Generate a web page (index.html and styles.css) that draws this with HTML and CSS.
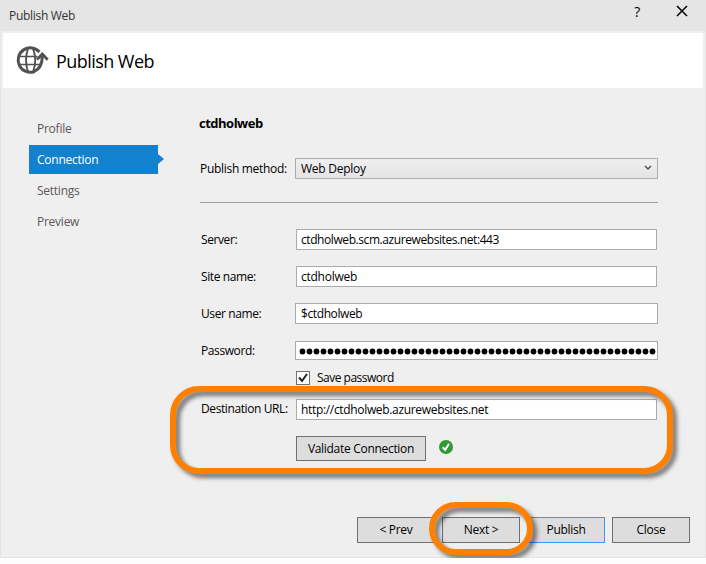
FILE: index.html
```html
<!DOCTYPE html>
<html lang="en">
<head>
<meta charset="utf-8">
<title>Publish Web</title>
<link rel="stylesheet" href="styles.css">
</head>
<body>
<div class="window">
  <div class="titlebar">
    <span class="caption">Publish Web</span>
    <span class="help">?</span>
    <svg class="close-icon" width="12" height="12" viewBox="0 0 12 12"><path d="M1 1 11 11M11 1 1 11" fill="none" stroke="#000" stroke-width="1.5"/></svg>
  </div>
  <header class="banner">
    <svg class="globe" width="34" height="30" viewBox="0 0 34 30" fill="none" stroke="#505153">
      <path d="M24.500 7A12.200 12.200 0 1 0 19 26.700Q27.500 23 27.300 10.500" stroke-width="3"/>
      <path d="M22 14.500 27.300 9 32.700 14.800" stroke-width="2.800"/>
      <path d="M4 11.500H22.500M4 19.500H25" stroke-width="1.600"/>
      <path d="M13 3.500Q9 15 13 27M18 3.500Q22.500 15 18 27" stroke-width="1.900"/>
    </svg>
    <h1>Publish Web</h1>
  </header>
  <div class="content">
    <nav class="steps">
      <a>Profile</a>
      <a class="active">Connection</a>
      <a>Settings</a>
      <a>Preview</a>
    </nav>
    <main class="form">
      <h2>ctdholweb</h2>
      <div class="row method">
        <label>Publish method:</label>
        <div class="select"><span>Web Deploy</span><svg width="8" height="6" viewBox="0 0 8 6"><path d="M1 1 4 4 7 1" fill="none" stroke="#555" stroke-width="1.500"/></svg></div>
      </div>
      <hr>
      <div class="row server"><label>Server:</label><div class="field"><span class="host">ctdholweb.scm.azurewebsites.net:443</span></div></div>
      <div class="row"><label>Site name:</label><div class="field"><span>ctdholweb</span></div></div>
      <div class="row"><label>User name:</label><div class="field wide"><span>$ctdholweb</span></div></div>
      <div class="row password"><label>Password:</label><div class="field wide"><svg width="361" height="17"><path class="dots" d="M6.500 9.500H356.600"/></svg></div></div>
      <div class="save"><span class="checkbox"><svg width="12" height="12" viewBox="0 0 12 12"><path d="M2 5.500 5 9 10 2" fill="none" stroke="#222" stroke-width="2"/></svg></span><span>Save password</span></div>
      <div class="row destination"><label>Destination URL:</label><div class="field"><span class="url">http://ctdholweb.azurewebsites.net</span></div></div>
      <div class="validate">
        <button class="btn validate-btn">Validate Connection</button>
        <svg width="14" height="14" viewBox="0 0 14 14"><circle cx="7" cy="7" r="7" fill="#339933"/><path d="M3.700 7.200 6.200 9.800 10 3.700" fill="none" stroke="#fff" stroke-width="2"/></svg>
      </div>
    </main>
  </div>
  <footer class="actions">
    <button class="btn">&lt; Prev</button>
    <button class="btn">Next &gt;</button>
    <button class="btn default">Publish</button>
    <button class="btn">Close</button>
  </footer>
  <div class="highlight highlight-url"></div>
  <div class="highlight highlight-next"></div>
</div>
</body>
</html>
```

FILE: styles.css
```css
* { box-sizing: border-box; }
body { margin: 0; background: #fdfdfd; font: 12px/16px "Open Sans", "Noto Sans", sans-serif; letter-spacing: -0.25px; color: #000; }
.window { position: relative; width: 706px; height: 558px; border: solid #e5e5e5; border-width: 0 1px 1px; background: #efefef; overflow: visible; }
.titlebar { height: 31px; background: #e5e5e5; display: flex; align-items: flex-start; padding: 8px 17px 0 8px; }
.caption { flex: 1; color: #333; letter-spacing: -0.3px; }
.help { margin: -5px 36px 0 0; font-size: 14px; line-height: 18px; font-weight: 500; }
.close-icon { margin-top: -3px; }
.banner { height: 55px; margin: 2px 2px 0; background: #fff; display: flex; align-items: center; padding-left: 12px; gap: 7px; }
.globe { margin-top: -1px; }
h1 { margin: 1px 0 0; font-size: 18px; line-height: 24px; font-weight: 400; letter-spacing: -0.55px; }
.content { display: flex; height: 429px; }
.steps { width: 129px; margin: 26px 0 0 28px; color: #5d5659; }
.steps a { display: flex; align-items: center; height: 29px; padding-left: 8px; margin-bottom: 2px; position: relative; }
.steps .active { background: #1382ce; color: #fff; }
.steps .active::after { content: ""; position: absolute; left: 129px; top: 9px; border: solid transparent; border-width: 5.500px 0 5.500px 6px; border-left-color: #1382ce; }
.form { width: 458px; margin-left: 42px; }
h2 { margin: 27px 0 27px -1px; font-size: 13px; line-height: 16px; font-weight: 700; letter-spacing: -0.5px; }
.row { display: flex; align-items: center; height: 21px; margin-bottom: 16px; padding-right: 1px; }
label { width: 96px; padding-left: 1px; white-space: nowrap; letter-spacing: -0.4px; }
.method { padding: 0; margin: 0; }
.method label { width: 95px; padding-left: 0; letter-spacing: -0.3px; }
.select { display: flex; align-items: center; justify-content: space-between; width: 363px; height: 21px; border: 1px solid #acacac; background: linear-gradient(#f0f0f0, #e4e4e4); padding: 0 5px; }
.select svg { margin-top: -1px; }
hr { height: 1px; border: 0; background: #a0a0a0; margin: 23px 0 26px; }
.field { width: 361px; height: 21px; border: 1px solid #ababab; background: #fff; padding: 2px 0 0 4px; white-space: nowrap; overflow: hidden; }
.field.wide { width: 363px; margin: 0 -1px; padding-left: 5px; letter-spacing: -0.4px; }
.host { letter-spacing: -0.42px; }
.url { letter-spacing: -0.33px; }
.password { margin-bottom: 0; height: 19px; margin-top: 17px; }
.password .field { height: 19px; padding: 0; }
.field svg { display: block; }
.dots { fill: none; stroke: #000; stroke-width: 5.8; stroke-linecap: round; stroke-dasharray: 0 7; }
.save { display: flex; align-items: center; margin: 10px 0 0 96px; height: 15px; gap: 7px; letter-spacing: -0.5px; }
.checkbox { width: 14px; height: 14px; border: 1px solid #707070; background: #fff; }
.checkbox svg { display: block; }
.destination { margin: 14px 0 16px; }
.destination label { margin-top: -1px; }
.validate { display: flex; margin-left: 96px; gap: 13px; }
.validate svg { margin-top: 4px; }
.btn { font: inherit; letter-spacing: -0.3px; color: #000; width: 78px; height: 26px; padding: 0; border: 1px solid #707070; border-radius: 0; background: #ddd; }
.validate-btn { width: 130px; height: 25px; }
.default { border-color: #3399ff; }
.actions { display: flex; justify-content: flex-end; gap: 7px; padding-right: 15px; }
.highlight { position: absolute; border: 6px solid #ff8000; filter: drop-shadow(4px 4px 2px rgba(0,0,0,.5)); }
.highlight-url { left: 169px; top: 386px; width: 503px; height: 88px; border-radius: 29px; }
.highlight-next { left: 428px; top: 502px; width: 104px; height: 53px; border-radius: 27px; }
```
